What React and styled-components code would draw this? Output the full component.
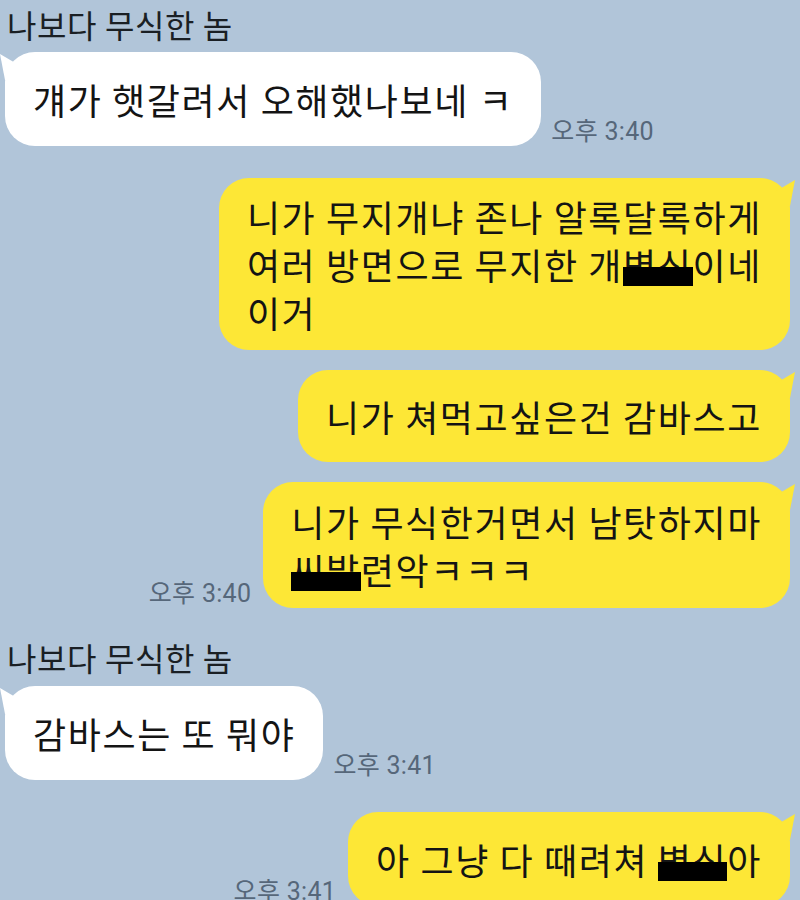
import React from "react";
import styled, { createGlobalStyle, css } from "styled-components";

const Global = createGlobalStyle`
  html, body { margin: 0; padding: 0; }
  body { background: #b1c5d9; font-family: "Noto Sans CJK KR", "Noto Sans", sans-serif; }
`;

const Screen = styled.div`
  width: 800px;
  height: 900px;
  overflow: hidden;
  background: #b1c5d9;
  display: flex;
  flex-direction: column;
  font-family: "Noto Sans CJK KR", "Noto Sans", sans-serif;
`;

const Name = styled.div`
  margin-top: ${(p) => p.$top}px;
  padding-left: 7px;
  font-size: 32px;
  letter-spacing: 0.6px;
  line-height: 40px;
  height: 40px;
  color: #1a1f24;
  white-space: nowrap;
`;

const Row = styled.div`
  margin-top: ${(p) => p.$top}px;
  display: flex;
  align-items: flex-end;
  gap: ${(p) => (p.$mine ? 12 : 10)}px;
  justify-content: ${(p) => (p.$mine ? "flex-end" : "flex-start")};
  padding-left: 5px;
  padding-right: 10px;
  flex-shrink: 0;
`;

const Bubble = styled.div`
  position: relative;
  background: ${(p) => (p.$mine ? "#fde736" : "#ffffff")};
  border-radius: 30px;
  padding: ${(p) => p.$pad}px 28px;
  font-size: 36px;
  line-height: 48px;
  color: #141414;
  white-space: nowrap;
  letter-spacing: 1.6px;

  &::before {
    content: "";
    position: absolute;
    top: 2px;
    width: 20px;
    height: 26px;
    background: inherit;
    ${(p) =>
      p.$mine
        ? css`
            right: -5px;
            clip-path: polygon(100% 0, 0 45%, 0 100%, 75% 100%);
          `
        : css`
            left: -5px;
            clip-path: polygon(0 0, 100% 45%, 100% 100%, 25% 100%);
          `}
  }
`;

const Censor = styled.span`
  position: relative;
  &::after {
    content: "";
    position: absolute;
    left: 0;
    right: 0;
    top: 56%;
    height: 36%;
    background: #000;
  }
`;

const Time = styled.div`
  font-family: Roboto, "Noto Sans CJK KR", sans-serif;
  font-size: 25px;
  letter-spacing: 0.3px;
  line-height: 30px;
  color: #56677a;
  white-space: nowrap;
  margin-bottom: -1px;
`;

export default function App() {
  return (
    <>
      <Global />
      <Screen>
        <Name $top={4}>나보다 무식한 놈</Name>
        <Row $top={8}>
          <Bubble $pad={23}>걔가 햇갈려서 오해했나보네 ㅋ</Bubble>
          <Time>오후 3:40</Time>
        </Row>

        <Row $top={32} $mine>
          <Bubble $mine $pad={14}>
            니가 무지개냐 존나 알록달록하게
            <br />
            여러 방면으로 무지한 개<Censor>병신</Censor>이네
            <br />
            이거
          </Bubble>
        </Row>

        <Row $top={20} $mine>
          <Bubble $mine $pad={22}>
            니가 쳐먹고싶은건 감바스고
          </Bubble>
        </Row>

        <Row $top={20} $mine>
          <Time>오후 3:40</Time>
          <Bubble $mine $pad={15}>
            니가 무식한거면서 남탓하지마
            <br />
            <Censor>씨발</Censor>련악ㅋㅋㅋ
          </Bubble>
        </Row>

        <Name $top={29}>나보다 무식한 놈</Name>
        <Row $top={9}>
          <Bubble $pad={23}>감바스는 또 뭐야</Bubble>
          <Time>오후 3:41</Time>
        </Row>

        <Row $top={32} $mine>
          <Time>오후 3:41</Time>
          <Bubble $mine $pad={23}>
            아 그냥 다 때려쳐 <Censor>병신</Censor>아
          </Bubble>
        </Row>
      </Screen>
    </>
  );
}
